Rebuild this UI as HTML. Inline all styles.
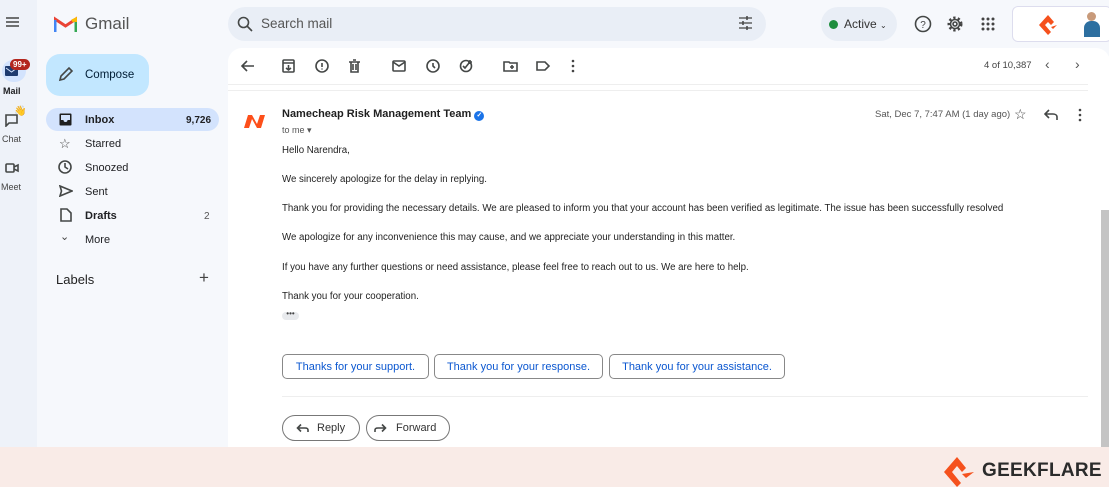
<!DOCTYPE html><html><head><style>
*{margin:0;padding:0;box-sizing:border-box}
body{width:1109px;height:487px;overflow:hidden;background:#f6f8fc;font-family:"Liberation Sans",Arial,sans-serif;position:relative;color:#202124}
.a{position:absolute}
.t{font-size:9.7px;color:#222}
.nav{font-size:11px;color:#202124}
.ic{stroke:#444746;fill:none;stroke-width:1.6}
.chip{position:absolute;top:354px;height:25px;border:1px solid #888;border-radius:5px;color:#0b57d0;font-size:11px;line-height:25px;text-align:center}
.pill{position:absolute;top:415px;height:26px;border:1px solid #777;border-radius:13px;font-size:11px;line-height:25px;color:#333}
</style></head><body>
<div class="a" style="left:0;top:0;width:37px;height:447px;background:#eef2f9"></div>
<svg class="a" style="left:5px;top:16px" width="15" height="12"><path d="M1 2H14M1 6H14M1 10H14" stroke="#444" stroke-width="1.5"/></svg>
<div class="a" style="left:2px;top:60px;width:24px;height:22px;background:#d3e3fd;border-radius:11px"></div>
<svg class="a" style="left:5px;top:66px" width="14" height="11"><rect x="0" y="0" width="13" height="10" rx="1" fill="#1f3b6e"/><path d="M1 2L6.5 6L12 2" stroke="#d3e3fd" fill="none"/></svg>
<div class="a" style="left:10px;top:59px;background:#b3261e;color:#fff;font-size:8px;font-weight:bold;border-radius:7px;padding:0 3px;line-height:11px">99+</div>
<div class="a" style="left:3px;top:86px;font-size:9px;font-weight:bold">Mail</div>
<svg class="a" style="left:5px;top:114px" width="14" height="13"><path d="M1 1H12V9H4L1 12Z" class="ic" stroke-width="1.3"/></svg>
<div class="a" style="left:14px;top:106px;font-size:10px">👋</div>
<div class="a" style="left:2px;top:134px;font-size:9px;color:#444">Chat</div>
<svg class="a" style="left:5px;top:163px" width="14" height="11"><rect x="1" y="1" width="8" height="8" rx="1" class="ic" stroke-width="1.3"/><path d="M9 4L13 2V8L9 6" class="ic" stroke-width="1.3"/></svg>
<div class="a" style="left:1px;top:182px;font-size:9px;color:#444">Meet</div>
<svg class="a" style="left:54px;top:16px" width="23" height="17"><path d="M1 16V3L11.5 10L22 3V16" fill="none" stroke="#ea4335" stroke-width="3"/><path d="M1 4V16" stroke="#4285f4" stroke-width="3"/><path d="M22 4V16" stroke="#34a853" stroke-width="3"/><path d="M18 5L22 3V6" stroke="#fbbc04" stroke-width="3"/></svg>
<div class="a" style="left:85px;top:14px;font-size:17px;color:#555">Gmail</div>
<div class="a" style="left:228px;top:7px;width:538px;height:34px;background:#e9eef6;border-radius:17px"></div>
<svg class="a" style="left:237px;top:16px" width="16" height="16"><circle cx="6.5" cy="6.5" r="5" class="ic" stroke-width="1.8"/><path d="M10 10L15 15" class="ic" stroke-width="1.8"/></svg>
<div class="a" style="left:261px;top:16px;font-size:13.5px;color:#555">Search mail</div>
<svg class="a" style="left:738px;top:16px" width="15" height="14"><path d="M1 2H14M1 7H14M1 12H14" stroke="#444" stroke-width="1.3"/><path d="M9 0V4M5 5V9M9 10V14" stroke="#444" stroke-width="1.5"/></svg>
<div class="a" style="left:821px;top:7px;width:76px;height:34px;background:#e9eef6;border-radius:17px"></div>
<div class="a" style="left:829px;top:20px;width:9px;height:9px;border-radius:50%;background:#1e8e3e"></div>
<div class="a" style="left:844px;top:17px;font-size:12px;color:#333">Active <span style="font-size:8px">⌄</span></div>
<svg class="a" style="left:914px;top:15px" width="18" height="18"><circle cx="9" cy="9" r="7.5" class="ic" stroke-width="1.5"/><text x="9" y="13" font-size="10" text-anchor="middle" fill="#444" font-family="Liberation Sans">?</text></svg>
<svg class="a" style="left:946px;top:15px" width="18" height="18"><circle cx="9" cy="9" r="6" stroke="#444" stroke-width="3" stroke-dasharray="2.2 2.2" fill="none"/><circle cx="9" cy="9" r="4.5" class="ic" stroke-width="1.5"/><circle cx="9" cy="9" r="2" class="ic" stroke-width="1.3"/></svg>
<svg class="a" style="left:981px;top:17px" width="14" height="14" fill="#444"><circle cx="2" cy="2" r="1.5"/><circle cx="7" cy="2" r="1.5"/><circle cx="12" cy="2" r="1.5"/><circle cx="2" cy="7" r="1.5"/><circle cx="7" cy="7" r="1.5"/><circle cx="12" cy="7" r="1.5"/><circle cx="2" cy="12" r="1.5"/><circle cx="7" cy="12" r="1.5"/><circle cx="12" cy="12" r="1.5"/></svg>
<div class="a" style="left:1012px;top:6px;width:100px;height:36px;background:#fff;border:1px solid #dde;border-radius:6px"></div>
<svg class="a" style="left:1037px;top:14px" width="22" height="22"><path d="M11 1L2 11L11 21L14 18L8 11L11 8L14 11L17 8L11 1" fill="#f5511d"/><path d="M14 13L20 11L16 15Z" fill="#f5511d"/></svg>
<div class="a" style="left:1087px;top:12px;width:9px;height:9px;border-radius:50%;background:#c89a7a"></div>
<div class="a" style="left:1084px;top:21px;width:16px;height:16px;border-radius:7px 7px 0 0;background:#2d6fa0"></div>
<div class="a" style="left:46px;top:54px;width:103px;height:42px;background:#c2e7ff;border-radius:14px"></div>
<svg class="a" style="left:58px;top:66px" width="16" height="16"><path d="M2 14L3 10L11 2L14 5L6 13Z" class="ic" stroke="#1f1f1f" stroke-width="1.6"/></svg>
<div class="a" style="left:85px;top:69px;font-size:11.5px;color:#001d35">Compose</div>
<div class="a" style="left:46px;top:108px;width:173px;height:23px;background:#d3e3fd;border-radius:12px"></div>
<svg class="a" style="left:59px;top:113px" width="13" height="13"><rect x="0.5" y="0.5" width="12" height="12" rx="1" fill="#1f1f1f"/><path d="M2 2H11V7H8.5A2 2 0 0 1 4.5 7H2Z" fill="#d3e3fd"/></svg>
<div class="a nav" style="left:85px;top:114px;font-weight:bold">Inbox</div>
<div class="a" style="left:186px;top:115px;font-size:10px;font-weight:bold">9,726</div>
<div class="a nav" style="left:59px;top:136px;font-size:13px;color:#444">☆</div>
<div class="a nav" style="left:85px;top:138px">Starred</div>
<svg class="a" style="left:58px;top:160px" width="14" height="14"><circle cx="7" cy="7" r="6" class="ic" stroke-width="1.4"/><path d="M7 3V7L10 9" class="ic" stroke-width="1.4"/></svg>
<div class="a nav" style="left:85px;top:162px">Snoozed</div>
<svg class="a" style="left:59px;top:185px" width="14" height="12"><path d="M1 1L13 6L1 11L2.5 6Z" class="ic" stroke-width="1.3"/></svg>
<div class="a nav" style="left:85px;top:186px">Sent</div>
<svg class="a" style="left:60px;top:208px" width="12" height="14"><path d="M1 1H7L11 5V13H1Z" class="ic" stroke-width="1.4"/></svg>
<div class="a nav" style="left:85px;top:210px;font-weight:bold">Drafts</div>
<div class="a" style="left:204px;top:211px;font-size:10px;color:#555">2</div>
<div class="a nav" style="left:60px;top:230px;font-size:11px;color:#444">⌄</div>
<div class="a nav" style="left:85px;top:234px">More</div>
<div class="a" style="left:56px;top:272px;font-size:13px;color:#222">Labels</div>
<div class="a" style="left:199px;top:268px;font-size:17px;color:#444">+</div>
<div class="a" style="left:228px;top:48px;width:882px;height:399px;background:#fff;border-radius:14px 14px 0 0"></div>
<div class="a" style="left:1101px;top:210px;width:8px;height:237px;background:#c4c4c4"></div>
<div class="a" style="left:228px;top:84px;width:860px;height:1px;background:#eee"></div>
<div class="a" style="left:228px;top:90px;width:860px;height:1px;background:#eee"></div>
<svg class="a" style="left:240px;top:58px" width="345" height="16">
<g class="ic" stroke-width="1.5">
<path d="M14 8H3M7 3L2 8L7 13"/>
<rect x="43" y="2" width="11" height="12" rx="1"/><path d="M43 5H54M48.5 7V12M46 10L48.5 12L51 10"/>
<circle cx="82" cy="8" r="6"/><path d="M82 5V9M82 10.5V11.5"/>
<path d="M109 4H120M111 4V14H118V4M113 2H116M113 6V12M116 6V12"/>
<rect x="153" y="3" width="12" height="10" rx="1"/><path d="M153 4L159 8L165 4"/>
<circle cx="193" cy="8" r="6"/><path d="M193 5V8L195 10"/>
<circle cx="226" cy="8" r="5.5"/><path d="M223 8L225 10L229 5M230 2V6M228 4H232"/>
<path d="M264 4H269L270 5H277V13H264Z M270 9H274M272 7V11"/>
<path d="M297 4H305L309 8L305 12H297Z"/>
</g>
<g fill="#444"><circle cx="333" cy="3" r="1.3"/><circle cx="333" cy="8" r="1.3"/><circle cx="333" cy="13" r="1.3"/></g>
</svg>
<div class="a" style="left:984px;top:60px;font-size:9.5px;color:#444">4 of 10,387</div>
<div class="a" style="left:1045px;top:56px;font-size:14px;color:#555">‹</div>
<div class="a" style="left:1075px;top:56px;font-size:14px;color:#555">›</div>
<svg class="a" style="left:243px;top:114px" width="24" height="15"><path d="M1 14L5 1H9L14 10L17 1H22L18 14H14L9 5L6 14Z" fill="#fd4f1a"/></svg>
<div class="a" style="left:282px;top:108px;font-size:11px;font-weight:bold;color:#1f1f1f">Namecheap Risk Management Team <span style="display:inline-block;width:10px;height:10px;border-radius:50%;background:#1a73e8;color:#fff;font-size:7px;line-height:10px;text-align:center;vertical-align:0">✓</span></div>
<div class="a" style="left:282px;top:125px;font-size:9px;color:#555">to me ▾</div>
<div class="a" style="left:875px;top:109px;font-size:9.5px;color:#555">Sat, Dec 7, 7:47 AM (1 day ago)</div>
<div class="a" style="left:1014px;top:106px;font-size:14px;color:#444">☆</div>
<svg class="a" style="left:1044px;top:109px" width="14" height="12"><path d="M13 11V8C13 6 11 5 9 5H2M5 1L1 5L5 9" class="ic" stroke-width="1.4"/></svg>
<svg class="a" style="left:1077px;top:108px" width="6" height="14" fill="#444"><circle cx="3" cy="2" r="1.3"/><circle cx="3" cy="7" r="1.3"/><circle cx="3" cy="12" r="1.3"/></svg>
<div class="a t" style="left:282px;top:145px">Hello Narendra,</div>
<div class="a t" style="left:282px;top:174px">We sincerely apologize for the delay in replying.</div>
<div class="a t" style="left:282px;top:203px">Thank you for providing the necessary details. We are pleased to inform you that your account has been verified as legitimate. The issue has been successfully resolved</div>
<div class="a t" style="left:282px;top:232px">We apologize for any inconvenience this may cause, and we appreciate your understanding in this matter.</div>
<div class="a t" style="left:282px;top:262px">If you have any further questions or need assistance, please feel free to reach out to us. We are here to help.</div>
<div class="a t" style="left:282px;top:291px">Thank you for your cooperation.</div>
<div class="a" style="left:282px;top:312px;width:17px;height:8px;background:#e8eaed;border-radius:4px;font-size:8px;line-height:4px;text-align:center;color:#444">•••</div>
<div class="chip" style="left:282px;width:147px">Thanks for your support.</div>
<div class="chip" style="left:434px;width:169px">Thank you for your response.</div>
<div class="chip" style="left:609px;width:176px">Thank you for your assistance.</div>
<div class="a" style="left:282px;top:396px;width:806px;height:1px;background:#eee"></div>
<div class="pill" style="left:282px;width:78px;padding-left:34px">Reply</div>
<svg class="a" style="left:296px;top:423px" width="13" height="10"><path d="M12 9V7C12 5.5 11 5 9 5H2M5 1.5L1.5 5L5 8.5" class="ic" stroke-width="1.3"/></svg>
<div class="pill" style="left:366px;width:84px;padding-left:29px">Forward</div>
<svg class="a" style="left:374px;top:423px" width="13" height="10"><path d="M1 9V7C1 5.5 2 5 4 5H11M8 1.5L11.5 5L8 8.5" class="ic" stroke-width="1.3"/></svg>
<div class="a" style="left:0;top:447px;width:1109px;height:40px;background:#f9ebe7"></div>
<svg class="a" style="left:942px;top:457px" width="34" height="30"><path d="M15 0L2 15L15 30L19 26L10 15L15 9L20 15L24 11Z" fill="#f5511d"/><path d="M20 17L32 15L24 21Z" fill="#f5511d"/></svg>
<div class="a" style="left:982px;top:460px;font-size:19px;font-weight:bold;color:#2b2b2b;letter-spacing:0.3px">GEEKFLARE</div>
</body></html>
